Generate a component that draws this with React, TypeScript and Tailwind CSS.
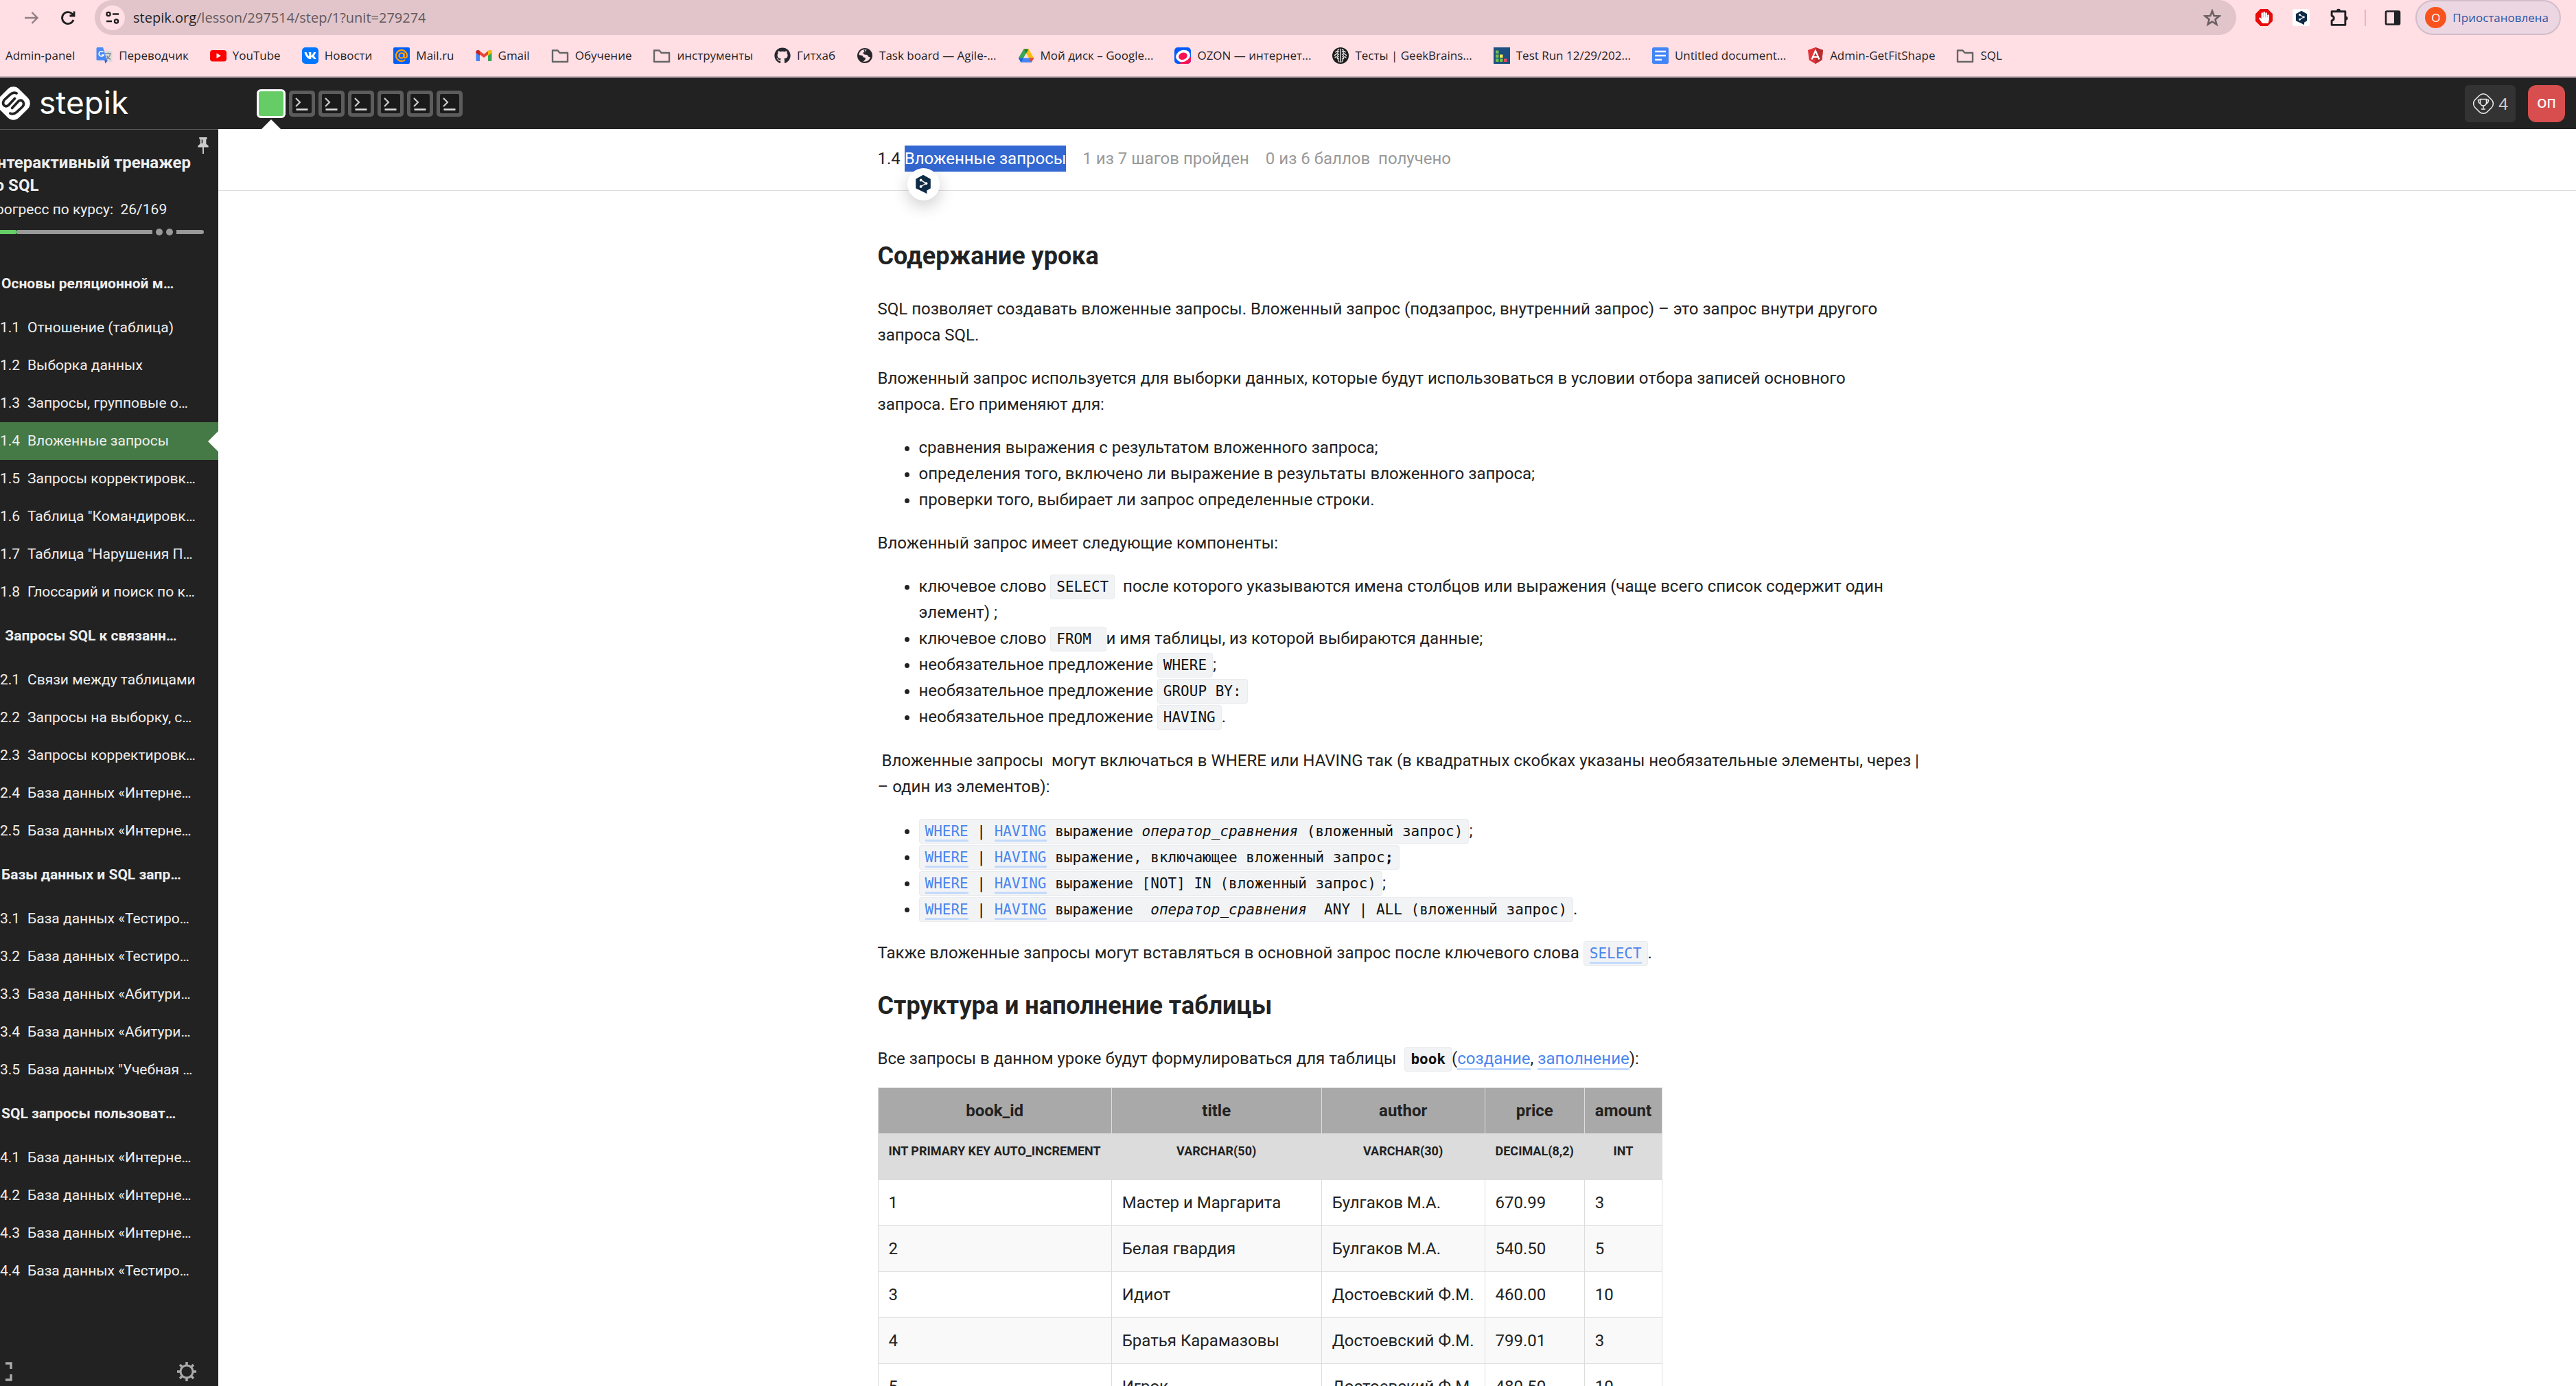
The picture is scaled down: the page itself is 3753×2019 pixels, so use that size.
import React from "react";
import { FaGithub, FaHandPaper, FaVk } from "react-icons/fa";

const FolderIcon = () => (
  <svg viewBox="0 0 26 24" className="h-6 w-[26px]" fill="none" stroke="#666" strokeWidth="2.4" strokeLinejoin="round" aria-hidden="true">
    <path d="M2 4.500h7.500l3 3.500H24v13H2z" />
  </svg>
);

const TranslateIcon = () => (
  <svg viewBox="0 0 24 24" className="size-6" aria-hidden="true">
    <path d="M9 5h13a1.500 1.500 0 0 1 1.500 1.500V20a1.500 1.500 0 0 1-1.500 1.500h-8z" fill="#dcdcdc" />
    <path d="M13 9h9M17.500 7.500V9M20.500 9.500c-.5 4-3 6.500-6 8M15.500 12c1 2.500 3 4.500 5.500 5.500" fill="none" stroke="#7c8790" strokeWidth="1.400" />
    <path d="m12 18 5 .5-3.500 5z" fill="#3a55c6" />
    <path d="M2 0h8l6 19H2a1.500 1.500 0 0 1-1.500-1.500v-16A1.500 1.500 0 0 1 2 0z" fill="#4a8af4" />
    <path d="M10.500 7A3.600 3.600 0 1 0 11 11H8" fill="none" stroke="#fff" strokeWidth="1.700" />
  </svg>
);

const YoutubeIcon = () => (
  <svg viewBox="0 0 24 24" className="size-6" aria-hidden="true">
    <rect y="4" width="24" height="16.500" rx="4" fill="#f00" />
    <path d="m9.500 8.500 6.500 3.700-6.500 3.700z" fill="#fff" />
  </svg>
);

const VkIcon = () => (
  <span className="flex size-6 items-center justify-center rounded-[5px] bg-[#07f] text-white" aria-hidden="true">
    <FaVk className="size-[18px]" />
  </span>
);

const MailIcon = () => (
  <svg viewBox="0 0 24 24" className="size-6" aria-hidden="true">
    <rect width="24" height="24" rx="2" fill="#005ff9" />
    <g fill="none" stroke="#ff9e00" strokeWidth="2.200" strokeLinecap="round">
      <circle cx="12" cy="12" r="3.600" />
      <path d="M15.600 8.500v4.800c0 3 4.400 2.500 4.400-1.300a8 8 0 1 0-3.500 6.600" />
    </g>
  </svg>
);

const GmailIcon = () => (
  <svg viewBox="0 0 24 24" className="size-6" aria-hidden="true">
    <path d="M.5 7v11.500A1.500 1.500 0 0 0 2 20h4V10z" fill="#4285f4" />
    <path d="M23.500 7v11.500A1.500 1.500 0 0 1 22 20h-4V10z" fill="#34a853" />
    <path d="M.5 6.500C.5 4 3 3.200 5 4.500L12 10l7-5.500c2-1.300 4.500-.5 4.500 2L18 11v-.5L12 15l-6-4.500z" fill="#ea4335" />
    <path d="M18 5.300 19 4.500c2-1.300 4.500-.5 4.500 2V8L18 12z" fill="#fbbc04" />
    <path d="M6 5.300 5 4.500C3 3.200.5 4 .5 6.500V8L6 12z" fill="#c5221f" />
  </svg>
);

const GlobeIcon = () => (
  <svg viewBox="0 0 24 24" className="size-6" aria-hidden="true">
    <circle cx="12" cy="12" r="11" fill="#26272b" />
    <path d="M9 3.500c-3 1-5.500 4-5.500 7.500l5 1 1.500 2.500 3 .5-.5 3-3 2.500c5 1 9-1.500 10.500-6l-3-1-1.500-2.500-4-.5-1.500-2 3-1.500 1.500-3.500c-2-.5-4-.5-5.500 0z" fill="#ffdee4" />
    <path d="m11 4 1.500 2-3 3M6 13l2 4" fill="none" stroke="#26272b" strokeWidth="1.500" />
  </svg>
);

const DriveIcon = () => (
  <svg viewBox="0 0 24 24" className="size-6" aria-hidden="true">
    <path d="M8.500 2.500h7L8 15.500H.8z" fill="#34a853" />
    <path d="M8.500 2.500h7l7.700 13H16z" fill="#fbbc04" />
    <path d="M8.500 2.500h7L12 8.700z" fill="#188038" />
    <path d="M.8 15.500h22.400L19.500 22h-15z" fill="#4285f4" />
    <path d="M16 15.500h7.200L19.500 22z" fill="#ea4335" />
    <path d="M.8 15.500H8L4.500 22z" fill="#1967d2" />
  </svg>
);

const OzonIcon = () => (
  <svg viewBox="0 0 24 24" className="size-6" aria-hidden="true">
    <clipPath id="ozon-box">
      <rect width="24" height="24" rx="5" />
    </clipPath>
    <g clipPath="url(#ozon-box)">
      <path d="M0 0h24v24H0z" fill="#005bff" />
      <path d="M24 14v10H8l2-6z" fill="#f91155" />
      <ellipse cx="12.500" cy="12.500" rx="10.500" ry="8.500" transform="rotate(-20 12.500 12.500)" fill="#fff" />
      <ellipse cx="12.500" cy="12.800" rx="6.500" ry="5" transform="rotate(-20 12.500 12.800)" fill="#f91155" />
    </g>
  </svg>
);

const BrainIcon = () => (
  <svg viewBox="0 0 24 24" className="size-6" aria-hidden="true">
    <circle cx="12" cy="12" r="12" fill="#1c1c1c" />
    <g fill="none" stroke="#ddd" strokeWidth="1.500" strokeLinecap="round">
      <path d="M12 2.500v19M9.500 3c-2 0-2 3 0 3M5 7c1-2 3.500-1 3 1s-4 1.500-4.500 4M9.500 10c-2 0-2.500 3-.5 3.500M4 15c1-2 4.500-1.500 3.500 1.500M9.500 16c-1.500 1-1 4 .5 5" />
      <path d="M14.500 3c2 0 2 3 0 3M19 7c-1-2-3.500-1-3 1s4 1.500 4.500 4M14.500 10c2 0 2.500 3 .5 3.500M20 15c-1-2-4.500-1.500-3.500 1.500M14.500 16c1.500 1 1 4-.5 5" />
    </g>
  </svg>
);

const TestRunIcon = () => (
  <svg viewBox="0 0 24 24" className="size-6" aria-hidden="true">
    <path d="M0 0h24v24H0z" fill="#1d4f80" />
    <path d="M3 4.500h4.500V9H3zM3 10.500h4.500V15H3zM3 16.500h4.500V21H3zM9 16.500h4.500V21H9z" fill="#6cc24a" />
    <path d="M9 10.500h4.500V15H9z" fill="#ffee58" />
    <path d="M15 16.500h4.500V21H15z" fill="#ef4b57" />
  </svg>
);

const DocsIcon = () => (
  <svg viewBox="0 0 24 24" className="size-6" aria-hidden="true">
    <rect width="24" height="24" rx="2.500" fill="#4285f4" />
    <path d="M4 6h16M4 12h16M4 18h10" stroke="#fff" strokeWidth="2.600" />
  </svg>
);

const AngularIcon = () => (
  <svg viewBox="0 0 24 24" className="size-6" aria-hidden="true">
    <path d="m12 0 11 4-1.700 14.500L12 24l-9.300-5.500L1 4z" fill="#e23237" />
    <path d="m12 0 11 4-1.700 14.500L12 24z" fill="#b52e31" />
    <path d="M6.500 17.500 12 5l5.500 12.500M8.500 14h7" fill="none" stroke="#fff" strokeWidth="2.200" />
  </svg>
);

const DeepLIcon = ({ className }: { className: string }) => (
  <svg viewBox="0 0 20 24" className={className} aria-hidden="true">
    <path d="M10 .5 19 5.600v11.200l-4.500 2.600V23.500L10.500 21.300 1 16.800V5.600z" fill="#0f2b46" />
    <path d="m7.500 7.200 6 3.600-6 3.700" fill="none" stroke="#fff" strokeWidth="1.200" />
    <circle cx="7.200" cy="7" r="1.600" fill="#fff" />
    <circle cx="13.700" cy="10.900" r="1.600" fill="#fff" />
    <circle cx="7.200" cy="14.700" r="1.600" fill="#fff" />
  </svg>
);

const bookmarks: { label: string; icon?: React.ReactNode }[] = [
  { label: "Admin-panel" },
  { label: "Переводчик", icon: <TranslateIcon /> },
  { label: "YouTube", icon: <YoutubeIcon /> },
  { label: "Новости", icon: <VkIcon /> },
  { label: "Mail.ru", icon: <MailIcon /> },
  { label: "Gmail", icon: <GmailIcon /> },
  { label: "Обучение", icon: <FolderIcon /> },
  { label: "инструменты", icon: <FolderIcon /> },
  { label: "Гитхаб", icon: <FaGithub className="size-6 text-[#24292e]" aria-hidden="true" /> },
  { label: "Task board — Agile-...", icon: <GlobeIcon /> },
  { label: "Мой диск – Google...", icon: <DriveIcon /> },
  { label: "OZON — интернет...", icon: <OzonIcon /> },
  { label: "Тесты | GeekBrains...", icon: <BrainIcon /> },
  { label: "Test Run 12/29/202...", icon: <TestRunIcon /> },
  { label: "Untitled document...", icon: <DocsIcon /> },
  { label: "Admin-GetFitShape", icon: <AngularIcon /> },
  { label: "SQL", icon: <FolderIcon /> },
];

function BrowserChrome() {
  return (
    <div className="shrink-0 border-b-2 border-[#c9b2b8] bg-[#ffdee4] font-['Open_Sans','Noto_Sans',sans-serif] text-[#1f1f1f]">
      <div className="flex h-[51px] items-center pr-[22px]">
        <button aria-label="Вперёд" className="ml-8 flex size-7 items-center justify-center">
          <svg viewBox="0 0 24 24" className="size-6" fill="none" stroke="#8f7f83" strokeWidth="2.400" aria-hidden="true">
            <path d="M2 12h18M12.500 4l8 8-8 8" />
          </svg>
        </button>
        <button aria-label="Обновить" className="ml-6 flex size-[30px] items-center justify-center">
          <svg viewBox="0 0 24 24" className="size-6" fill="none" stroke="#1f1f1f" strokeWidth="2.800" aria-hidden="true">
            <path d="M20 15a8.500 8.500 0 1 1-1.800-8.800L21 9M21 2.500V9h-6.500" />
          </svg>
        </button>
        <div className="ml-6 flex h-full flex-1 items-center rounded-full bg-[#e1c5ca] pl-2">
          <button aria-label="Сведения о сайте" className="flex size-9 items-center justify-center rounded-full bg-[#ffdee4]">
            <svg viewBox="0 0 20 20" className="size-5" fill="none" stroke="#1f1f1f" strokeWidth="2.300" aria-hidden="true">
              <circle cx="4" cy="4.500" r="2.600" />
              <path d="M10 4.500h9M1 15h8" />
              <circle cx="15.500" cy="15" r="2.600" />
            </svg>
          </button>
          <div className="ml-3 flex-1 text-[20px] text-[#64585b]">
            <span className="text-[#1f1f1f]">stepik.org</span>/lesson/297514/step/1?unit=279274
          </div>
          <button aria-label="Добавить в закладки" className="mr-[22px]">
            <svg viewBox="0 0 24 24" className="size-[26px]" fill="none" stroke="#6a5f62" strokeWidth="2.400" aria-hidden="true">
              <path d="m12 2.800 2.500 6.500 7 .4-5.400 4.400 1.800 6.800-5.900-3.800-5.900 3.800 1.800-6.800L2.500 9.700l7-.4z" />
            </svg>
          </button>
        </div>
        <div className="ml-7 flex items-center">
          <button aria-label="Блокировщик рекламы">
            <span className="relative flex size-[25px] items-center justify-center text-white">
              <svg viewBox="0 0 24 24" className="absolute inset-0 size-full" aria-hidden="true">
                <path d="M7 0h10l7 7v10l-7 7H7l-7-7V7z" fill="#e90b0b" />
              </svg>
              <FaHandPaper className="relative size-[17px]" aria-hidden="true" />
            </span>
          </button>
          <button aria-label="DeepL" className="ml-[29px] flex size-[25px] items-center justify-center rounded-[3px] bg-white">
            <DeepLIcon className="h-[22px] w-[18px]" />
          </button>
          <button aria-label="Расширения" className="ml-[29px]">
            <svg viewBox="0 0 26 26" className="size-[27px]" fill="none" stroke="#1f2124" strokeWidth="2.800" strokeLinejoin="round" aria-hidden="true">
              <path d="M3 4.500h19v19H3v-6.200c2-.3 3-1.500 3-3.300S5 11 3 10.700z" />
              <path d="M10 4a2.700 2.700 0 0 1 5.400 0zM22.500 11.300a2.700 2.700 0 0 1 0 5.400z" fill="#1f2124" stroke="none" />
              <path d="M10.500 3.500a2 2 0 0 1 4 0M22.800 12a2 2 0 0 1 0 4" strokeWidth="1.500" />
            </svg>
          </button>
          <span className="ml-6 h-6 w-0.5 bg-[#ffabb8]" />
          <button aria-label="Боковая панель" className="ml-[27px]">
            <svg viewBox="0 0 24 24" className="size-6" aria-hidden="true">
              <rect x="2" y="2.500" width="20" height="19" rx="1.500" fill="none" stroke="#1f2124" strokeWidth="2.600" />
              <path d="M14 2h8v20h-8z" fill="#1f2124" />
            </svg>
          </button>
          <button className="ml-[21px] flex h-[51px] items-center gap-[9px] rounded-full border-2 border-[#d2bdc9] bg-[#ecd6e2] pr-4 pl-3 text-[17px] text-[#2c56a4]">
            <span className="flex size-[31px] items-center justify-center rounded-full bg-[#f8531c] text-white">О</span>
            Приостановлена
          </button>
        </div>
      </div>
      <nav aria-label="Закладки" className="flex h-[60px] items-center gap-[31px] pl-2 text-[17px] whitespace-nowrap">
        {bookmarks.map(({ label, icon }) => (
          <a key={label} href="#" className="flex items-center gap-[9px]">
            {icon}
            {label}
          </a>
        ))}
      </nav>
    </div>
  );
}

function StepikHeader() {
  return (
    <header className="flex h-[75px] shrink-0 bg-[#222] text-white">
      <a href="#" className="flex w-[318px] items-center" aria-label="stepik">
        <svg viewBox="0 28 134 154" className="h-[51px] w-[45px]" aria-hidden="true">
          <rect x="-4" y="43" width="124" height="124" rx="35" transform="rotate(45 58 105)" fill="#fff" />
          <g fill="none" stroke="#222" strokeWidth="11" strokeLinecap="round" strokeLinejoin="round">
            <path d="M72 61Q58 54 44 66L18 90Q7 104 18 115Q27 122 38 112L64 84" />
            <path d="M44 149Q58 156 72 144L98 120Q109 106 98 95Q89 88 78 98L52 126" />
          </g>
        </svg>
        <span className="ml-3 pb-1 font-['Inter',sans-serif] text-[46px] leading-none">stepik</span>
      </a>
      <nav aria-label="Шаги" className="ml-14 flex items-center gap-[5px]">
        <a href="#" aria-label="Шаг 1" className="relative size-[42px] rounded-[6px] border-3 border-white bg-[#6c6]">
          <svg viewBox="0 0 30 15" className="absolute top-[41px] left-[3px] h-[15px] w-[30px]" aria-hidden="true">
            <path d="M15 0 30 15H0z" fill="#fff" />
          </svg>
        </a>
        {[2, 3, 4, 5, 6, 7].map((n) => (
          <a key={n} href="#" aria-label={`Шаг ${n}`} className="flex size-[38px] items-center justify-center rounded-[5px] bg-[#5c5c5c]">
            <svg viewBox="0 0 28 28" className="size-7" fill="none" aria-hidden="true">
              <rect width="28" height="28" rx="2" fill="#1a1a1a" />
              <path d="m5 6 6 6-6 6" stroke="#ccc" strokeWidth="2.200" />
              <path d="M5.500 22.500h17" stroke="#ddd" strokeWidth="2.600" />
            </svg>
          </a>
        ))}
      </nav>
      <div className="ml-auto flex items-center gap-[18px] pr-4">
        <button className="flex h-[54px] w-[74px] items-center justify-center gap-1.5 rounded-[6px] bg-[#333] font-['Noto_Sans',sans-serif] text-[24px] text-[#ccc]">
          <svg viewBox="0 0 32 32" className="size-8" fill="none" stroke="#eee" strokeWidth="1.500" aria-hidden="true">
            <rect x="3.500" y="3.500" width="25" height="25" rx="8" transform="rotate(45 16 16)" />
            <path d="M11.500 9.500h9v5a4.500 4.500 0 0 1-9 0zM11.500 10.500h-3c0 3.500 1 5 3.500 5.500M20.500 10.500h3c0 3.500-1 5-3.500 5.500M16 19v4M13 24h6" />
          </svg>
          4
        </button>
        <button className="size-[54px] rounded-xl bg-[#d84e4e] font-['Open_Sans',sans-serif] text-[18px] font-semibold">ОП</button>
      </div>
    </header>
  );
}

const chapters = [
  {
    title: "Основы реляционной м…",
    lessons: [
      ["1.1", "Отношение (таблица)"],
      ["1.2", "Выборка данных"],
      ["1.3", "Запросы, групповые о…"],
      ["1.4", "Вложенные запросы"],
      ["1.5", "Запросы корректировк…"],
      ["1.6", "Таблица \"Командировк…"],
      ["1.7", "Таблица \"Нарушения П…"],
      ["1.8", "Глоссарий и поиск по к…"],
    ],
  },
  {
    title: "\u00a0Запросы SQL к связанн…",
    lessons: [
      ["2.1", "Связи между таблицами"],
      ["2.2", "Запросы на выборку, с…"],
      ["2.3", "Запросы корректировк…"],
      ["2.4", "База данных «Интерне…"],
      ["2.5", "База данных «Интерне…"],
    ],
  },
  {
    title: "Базы данных и SQL запр…",
    lessons: [
      ["3.1", "База данных «Тестиро…"],
      ["3.2", "База данных «Тестиро…"],
      ["3.3", "База данных «Абитури…"],
      ["3.4", "База данных «Абитури…"],
      ["3.5", "База данных \"Учебная …"],
    ],
  },
  {
    title: "SQL запросы пользоват…",
    lessons: [
      ["4.1", "База данных «Интерне…"],
      ["4.2", "База данных «Интерне…"],
      ["4.3", "База данных «Интерне…"],
      ["4.4", "База данных «Тестиро…"],
    ],
  },
];

function Sidebar() {
  return (
    <aside className="relative flex w-[318px] shrink-0 flex-col overflow-hidden border-t border-[#5a5a5a] bg-[#222] text-[21px] whitespace-nowrap text-[#eee]">
      <button aria-label="Закрепить" className="absolute top-[11px] right-[14px]">
        <svg viewBox="0 0 16 26" className="h-[25px] w-4" aria-hidden="true">
          <path d="M2 0h12v2l-1.500 1v7L16 13v2H0v-2l3.500-3V3L2 2zM7 15h2v10H7z" fill="#ccc" />
          <path d="M5.500 3.500h2V9h-2z" fill="#444" />
        </svg>
      </button>
      <div className="pt-8">
        <h2 className="-ml-[21px] text-[24px] leading-[33px] font-bold">
          Интерактивный тренажер
          <br />
          по SQL
        </h2>
        <p className="-ml-[21px] leading-[36px]">Прогресс по курсу:&nbsp; 26/169</p>
        <div className="flex h-[30px] items-center pr-[21px]" role="progressbar" aria-label="Прогресс по курсу" aria-valuenow={26} aria-valuemax={169}>
          <span className="h-1.5 w-[25px] rounded-r-full bg-[#6c6]" />
          <span className="h-1.5 flex-1 bg-[#999]" />
          <span className="ml-[5px] size-2.5 rounded-full bg-[#999]" />
          <span className="ml-[5px] size-2.5 rounded-full bg-[#999]" />
          <span className="ml-[5px] h-1.5 w-10 rounded-r-full bg-[#999]" />
        </div>
      </div>
      <nav aria-label="Содержание курса" className="pt-6">
        {chapters.map((chapter) => (
          <section key={chapter.title}>
            <h3 className="flex h-[73px] items-center pl-0.5 font-bold">{chapter.title}</h3>
            {chapter.lessons.map(([num, name]) => (
              <a
                key={num}
                href="#"
                aria-current={num === "1.4" ? "page" : undefined}
                className="relative flex h-[55px] items-center aria-[current=page]:bg-[#457945]"
              >
                <span className="w-10 shrink-0">{num}</span>
                {name}
                {num === "1.4" && (
                  <svg viewBox="0 0 15 30" className="absolute right-0 h-[30px] w-[15px]" aria-hidden="true">
                    <path d="M15 0v30L0 15z" fill="#fff" />
                  </svg>
                )}
              </a>
            ))}
          </section>
        ))}
      </nav>
      <div className="absolute inset-x-0 bottom-0 flex h-[42px] items-center justify-between bg-[#222] pr-8">
        <button aria-label="Во весь экран" className="-ml-2.5">
          <svg viewBox="0 0 28 28" className="size-7" fill="none" stroke="#aaa" strokeWidth="3.500" aria-hidden="true">
            <path d="M2 10V2h8M18 2h8v8M26 18v8h-8M10 26H2v-8" />
          </svg>
        </button>
        <button aria-label="Настройки">
          <svg viewBox="0 0 28 28" className="size-7" fill="none" stroke="#aaa" aria-hidden="true">
            <circle cx="14" cy="14" r="9" strokeWidth="3" />
            <path d="M14 0v4M14 24v4M0 14h4M24 14h4M4.100 4.100l2.900 2.900M21 21l2.900 2.900M4.100 23.900 7 21M21 7l2.900-2.900" strokeWidth="3.500" />
          </svg>
        </button>
      </div>
    </aside>
  );
}

const Code = ({ children }: { children: React.ReactNode }) => (
  <code className="rounded-[4px] border border-[#e9ebee] bg-[#f2f3f5] px-2 py-[5px] font-['DejaVu_Sans_Mono',monospace] text-[21px] leading-none whitespace-pre-wrap text-[#111]">
    {children}
  </code>
);

const Link = ({ children }: { children: React.ReactNode }) => (
  <a href="#" className="border-b-3 border-[#c3dafc] text-[#4a86ee]">
    {children}
  </a>
);

const WhereHaving = () => (
  <>
    <Link>WHERE</Link> | <Link>HAVING</Link>
  </>
);

const columns = [
  ["book_id", "INT PRIMARY KEY AUTO_INCREMENT"],
  ["title", "VARCHAR(50)"],
  ["author", "VARCHAR(30)"],
  ["price", "DECIMAL(8,2)"],
  ["amount", "INT"],
];

const books = [
  ["1", "Мастер и Маргарита", "Булгаков М.А.", "670.99", "3"],
  ["2", "Белая гвардия", "Булгаков М.А.", "540.50", "5"],
  ["3", "Идиот", "Достоевский Ф.М.", "460.00", "10"],
  ["4", "Братья Карамазовы", "Достоевский Ф.М.", "799.01", "3"],
  ["5", "Игрок", "Достоевский Ф.М.", "480.50", "10"],
];

function Lesson() {
  return (
    <main className="min-w-0 flex-1 overflow-hidden bg-white">
      <div className="h-[90px] border-b border-[#ddd]">
        <div className="relative mx-auto flex h-[86px] max-w-[1528px] items-center pl-[7px]">
          <h1>
            1.4 <span className="inline-block bg-[#3367d1] leading-[38px] text-white">Вложенные запросы</span>
          </h1>
          <span className="ml-6 text-[#999]">1 из 7 шагов пройден</span>
          <span className="ml-6 text-[#999]">0 из 6 баллов&nbsp; получено</span>
          <button
            aria-label="Перевести в DeepL"
            className="absolute top-[57px] left-[50px] flex size-[47px] items-center justify-center rounded-full bg-white shadow-[0_8px_24px_rgba(0,0,0,0.2)]"
          >
            <DeepLIcon className="h-[29px] w-6" />
          </button>
        </div>
      </div>
      <article className="mx-auto max-w-[1528px] pl-[7px] leading-[38px]">
        <h2 className="mt-[72px] mb-[35px] text-[36px] leading-[46px] font-bold">Содержание урока</h2>
        <p className="mb-[25px]">
          SQL позволяет создавать вложенные запросы. Вложенный запрос (подзапрос, внутренний запрос) – это запрос внутри другого запроса SQL.
        </p>
        <p className="mb-[25px]">
          Вложенный запрос используется для выборки данных, которые будут использоваться в условии отбора записей основного запроса.&nbsp;Его применяют для:
        </p>
        <ul className="mb-[25px] list-disc pl-[60px]">
          <li>сравнения выражения с результатом вложенного запроса;</li>
          <li>определения того, включено ли выражение в результаты вложенного запроса;</li>
          <li>проверки того, выбирает ли запрос определенные строки.</li>
        </ul>
        <p className="mb-[25px]">Вложенный запрос имеет следующие компоненты:</p>
        <ul className="mb-[26px] list-disc pl-[60px]">
          <li>
            ключевое слово <Code>SELECT</Code>&nbsp; после которого указываются имена столбцов или выражения (чаще всего список содержит один элемент) ;
          </li>
          <li>
            ключевое слово <Code>{"FROM "}</Code>и имя таблицы, из которой выбираются данные;
          </li>
          <li>
            необязательное предложение <Code>WHERE</Code>;
          </li>
          <li>
            необязательное предложение <Code>GROUP BY:</Code>
          </li>
          <li>
            необязательное предложение <Code>HAVING</Code>.
          </li>
        </ul>
        <p className="mb-[26px]">
          &nbsp;Вложенные запросы&nbsp; могут включаться в WHERE или HAVING так (в квадратных скобках указаны необязательные элементы, через | – один из элементов):
        </p>
        <ul className="mb-[26px] list-disc pl-[60px]">
          <li>
            <Code>
              <WhereHaving /> выражение <em>оператор_сравнения</em> (вложенный запрос)
            </Code>
            ;
          </li>
          <li>
            <Code>
              <WhereHaving /> выражение, включающее вложенный запрос<b>;</b>
            </Code>
          </li>
          <li>
            <Code>
              <WhereHaving /> выражение [NOT] IN (вложенный запрос)
            </Code>
            ;
          </li>
          <li>
            <Code>
              <WhereHaving /> выражение&nbsp; <em>оператор_сравнения</em>&nbsp; ANY | ALL (вложенный запрос)
            </Code>
            .
          </li>
        </ul>
        <p className="mb-[35px]">
          Также вложенные запросы могут вставляться в основной запрос после ключевого слова{" "}
          <Code>
            <Link>SELECT</Link>
          </Code>
          .
        </p>
        <h2 className="mb-[35px] text-[36px] leading-[46px] font-bold">Структура и наполнение таблицы</h2>
        <p className="mb-[23px]">
          Все запросы в данном уроке будут формулироваться для таблицы&nbsp;{" "}
          <Code>
            <b>book</b>
          </Code>
          (<Link>создание</Link>, <Link>заполнение</Link>):
        </p>
        <table className="border-collapse border border-[#ddd]">
          <thead>
            <tr className="bg-[#a9a9a9]">
              {columns.map(([name]) => (
                <th key={name} scope="col" className="border border-[#ddd] px-[15px] py-3.5 leading-[38px] font-bold">
                  {name}
                </th>
              ))}
            </tr>
            <tr className="bg-[#dcdcdc] text-[18px]">
              {columns.map(([name, type]) => (
                <th key={name} scope="col" className="h-[67px] border border-[#dcdcdc] px-[15px] pb-4 font-bold nth-2:w-[306px]">
                  {type}
                </th>
              ))}
            </tr>
          </thead>
          <tbody>
            {books.map((row) => (
              <tr key={row[0]} className="even:bg-[#f9f9f9]">
                {row.map((cell, i) => (
                  <td key={i} className="border border-[#ddd] px-[15px] py-3.5 leading-[38px]">
                    {cell}
                  </td>
                ))}
              </tr>
            ))}
          </tbody>
        </table>
      </article>
    </main>
  );
}

export default function App() {
  return (
    <div className="flex h-screen flex-col overflow-hidden bg-white font-['Roboto',sans-serif] text-[24px] text-[#222]">
      <BrowserChrome />
      <StepikHeader />
      <div className="flex min-h-0 flex-1">
        <Sidebar />
        <Lesson />
      </div>
    </div>
  );
}
